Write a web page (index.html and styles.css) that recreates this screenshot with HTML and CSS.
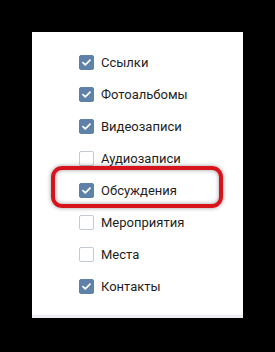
FILE: index.html
```html
<!DOCTYPE html>
<html lang="ru">
<head>
    <meta charset="UTF-8">
    <title>Разделы</title>
    <link rel="stylesheet" href="styles.css">
</head>
<body>
    <div class="panel">
        <ul class="options">
            <li class="option"><span class="box checked"></span>Ссылки</li>
            <li class="option"><span class="box checked"></span>Фотоальбомы</li>
            <li class="option"><span class="box checked"></span>Видеозаписи</li>
            <li class="option"><span class="box"></span>Аудиозаписи</li>
            <li class="option"><span class="box checked"></span>Обсуждения</li>
            <li class="option"><span class="box"></span>Мероприятия</li>
            <li class="option"><span class="box"></span>Места</li>
            <li class="option"><span class="box checked"></span>Контакты</li>
        </ul>
        <div class="highlight"></div>
    </div>
</body>
</html>
```

FILE: styles.css
```css
body {
    margin: 0;
    background-color: #000;
    font-family: Roboto, "Liberation Sans", sans-serif;
    height: 352px;
}

.panel {
    position: relative;
    margin: 32px 0 0 32px;
    width: 211px;
    height: 286px;
    background-color: #fff;
    box-sizing: border-box;
    border-bottom: 3px solid #eceef1;
}

.options {
    list-style: none;
    margin: 0;
    padding: 14px 0 0 47px;
}

.option {
    display: flex;
    align-items: center;
    height: 32px;
    font-size: 13px;
    color: #1e1e1e;
}

.box {
    width: 15px;
    height: 15px;
    box-sizing: border-box;
    margin-right: 7px;
    border: 1px solid #c3cad2;
    border-radius: 2px;
    background-color: #fff;
}

.box.checked {
    border-color: #5e81a8;
    background-color: #5e81a8;
    background-image: url("data:image/svg+xml,%3Csvg xmlns='http://www.w3.org/2000/svg' width='15' height='15'%3E%3Cpath d='M4 7.6l2.3 2.2L11 5.2' fill='none' stroke='%23fff' stroke-width='1.8' stroke-linecap='round' stroke-linejoin='round'/%3E%3C/svg%3E");
    background-position: -1px -1px;
}

.highlight {
    position: absolute;
    left: 19px;
    top: 134px;
    width: 172px;
    height: 42px;
    box-sizing: border-box;
    border: 4px solid #d7141c;
    border-radius: 11px;
    box-shadow: 0 0 4px rgba(0, 0, 0, 0.4), inset 0 0 4px rgba(0, 0, 0, 0.4);
}
```
